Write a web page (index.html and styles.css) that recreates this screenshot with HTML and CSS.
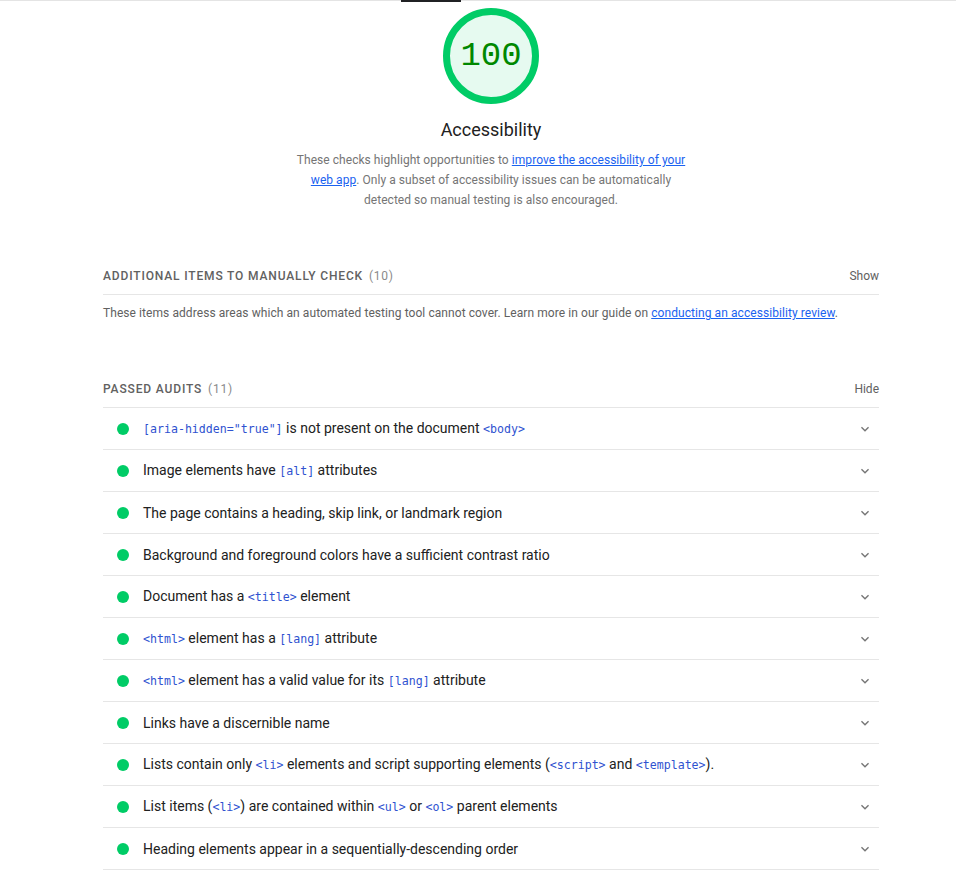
FILE: index.html
```html
<!DOCTYPE html>
<html lang="en">
<head>
<meta charset="utf-8">
<title>Accessibility</title>
<link rel="stylesheet" href="styles.css">
</head>
<body>
<div class="tabbar"><div class="tab-indicator"></div></div>
<main class="category">
  <div class="score">
    <svg class="gauge" width="96" height="96" viewBox="0 0 96 96">
      <circle cx="48" cy="48" r="44.5" fill="#e6faf0" stroke="#00cc66" stroke-width="7"/>
    </svg>
    <div class="gauge-value">100</div>
    <div class="score-title">Accessibility</div>
    <p class="score-desc">These checks highlight opportunities to <a href="#">improve the accessibility of your web app</a>. Only a subset of accessibility issues can be automatically detected so manual testing is also encouraged.</p>
  </div>

  <section class="clump">
    <div class="clump-header">
      <span class="clump-title">Additional items to manually check <span class="clump-count">(10)</span></span>
      <span class="clump-toggle">Show</span>
    </div>
    <p class="clump-desc">These items address areas which an automated testing tool cannot cover. Learn more in our guide on <a href="#">conducting an accessibility review</a>.</p>
  </section>

  <section class="clump passed">
    <div class="clump-header">
      <span class="clump-title">Passed audits <span class="clump-count">(11)</span></span>
      <span class="clump-toggle">Hide</span>
    </div>
    <ul class="audits">
      <li class="audit"><span class="dot"></span><span class="audit-title"><code>[aria-hidden="true"]</code> is not present on the document <code>&lt;body&gt;</code></span><svg class="chev" width="16" height="16" viewBox="0 0 24 24"><path d="M7.41 8.59L12 13.17l4.59-4.58L18 10l-6 6-6-6 1.41-1.41z"/></svg></li>
      <li class="audit"><span class="dot"></span><span class="audit-title">Image elements have <code>[alt]</code> attributes</span><svg class="chev" width="16" height="16" viewBox="0 0 24 24"><path d="M7.41 8.59L12 13.17l4.59-4.58L18 10l-6 6-6-6 1.41-1.41z"/></svg></li>
      <li class="audit"><span class="dot"></span><span class="audit-title">The page contains a heading, skip link, or landmark region</span><svg class="chev" width="16" height="16" viewBox="0 0 24 24"><path d="M7.41 8.59L12 13.17l4.59-4.58L18 10l-6 6-6-6 1.41-1.41z"/></svg></li>
      <li class="audit"><span class="dot"></span><span class="audit-title">Background and foreground colors have a sufficient contrast ratio</span><svg class="chev" width="16" height="16" viewBox="0 0 24 24"><path d="M7.41 8.59L12 13.17l4.59-4.58L18 10l-6 6-6-6 1.41-1.41z"/></svg></li>
      <li class="audit"><span class="dot"></span><span class="audit-title">Document has a <code>&lt;title&gt;</code> element</span><svg class="chev" width="16" height="16" viewBox="0 0 24 24"><path d="M7.41 8.59L12 13.17l4.59-4.58L18 10l-6 6-6-6 1.41-1.41z"/></svg></li>
      <li class="audit"><span class="dot"></span><span class="audit-title"><code>&lt;html&gt;</code> element has a <code>[lang]</code> attribute</span><svg class="chev" width="16" height="16" viewBox="0 0 24 24"><path d="M7.41 8.59L12 13.17l4.59-4.58L18 10l-6 6-6-6 1.41-1.41z"/></svg></li>
      <li class="audit"><span class="dot"></span><span class="audit-title"><code>&lt;html&gt;</code> element has a valid value for its <code>[lang]</code> attribute</span><svg class="chev" width="16" height="16" viewBox="0 0 24 24"><path d="M7.41 8.59L12 13.17l4.59-4.58L18 10l-6 6-6-6 1.41-1.41z"/></svg></li>
      <li class="audit"><span class="dot"></span><span class="audit-title">Links have a discernible name</span><svg class="chev" width="16" height="16" viewBox="0 0 24 24"><path d="M7.41 8.59L12 13.17l4.59-4.58L18 10l-6 6-6-6 1.41-1.41z"/></svg></li>
      <li class="audit"><span class="dot"></span><span class="audit-title">Lists contain only <code>&lt;li&gt;</code> elements and script supporting elements (<code>&lt;script&gt;</code> and <code>&lt;template&gt;</code>).</span><svg class="chev" width="16" height="16" viewBox="0 0 24 24"><path d="M7.41 8.59L12 13.17l4.59-4.58L18 10l-6 6-6-6 1.41-1.41z"/></svg></li>
      <li class="audit"><span class="dot"></span><span class="audit-title">List items (<code>&lt;li&gt;</code>) are contained within <code>&lt;ul&gt;</code> or <code>&lt;ol&gt;</code> parent elements</span><svg class="chev" width="16" height="16" viewBox="0 0 24 24"><path d="M7.41 8.59L12 13.17l4.59-4.58L18 10l-6 6-6-6 1.41-1.41z"/></svg></li>
      <li class="audit"><span class="dot"></span><span class="audit-title">Heading elements appear in a sequentially-descending order</span><svg class="chev" width="16" height="16" viewBox="0 0 24 24"><path d="M7.41 8.59L12 13.17l4.59-4.58L18 10l-6 6-6-6 1.41-1.41z"/></svg></li>
    </ul>
  </section>
</main>
</body>
</html>
```

FILE: styles.css
```css
html, body {
  margin: 0;
  padding: 0;
  background: #ffffff;
}
body {
  font-family: Roboto, "Liberation Sans", sans-serif;
  color: #212121;
  overflow: hidden;
}
a {
  color: #1a62f0;
  text-decoration: underline;
}
.tabbar {
  height: 2px;
  border-top: 1px solid #e4e4e4;
  box-sizing: border-box;
  position: relative;
}
.tab-indicator {
  position: absolute;
  top: -1px;
  left: 401px;
  width: 60px;
  height: 2px;
  background: #202124;
}
.category {
  width: 776px;
  margin-left: 103px;
}
.score {
  display: flex;
  flex-direction: column;
  align-items: center;
  padding-top: 6px;
  position: relative;
}
.gauge {
  display: block;
}
.gauge-value {
  position: absolute;
  top: 6px;
  left: 0;
  right: 0;
  height: 96px;
  line-height: 96px;
  text-align: center;
  font-family: "Liberation Mono", monospace;
  font-size: 34px;
  color: #008800;
}
.score-title {
  margin-top: 14px;
  font-size: 18px;
  line-height: 24px;
  color: #212121;
}
.score-desc {
  margin: 8px 0 0;
  width: 400px;
  text-align: center;
  font-size: 12px;
  line-height: 20px;
  letter-spacing: 0.05px;
  color: #757575;
}
.clump {
  margin-top: 46px;
}
.clump.passed {
  margin-top: 46px;
}
.clump-header {
  display: flex;
  justify-content: space-between;
  align-items: center;
  padding: 10px 0 8px;
  line-height: 20px;
  border-bottom: 1px solid #e6e6e6;
}
.clump-title {
  font-size: 12px;
  font-weight: 500;
  text-transform: uppercase;
  letter-spacing: 0.85px;
  color: #616161;
}
.clump-count {
  font-weight: 400;
  color: #8a8a8a;
  letter-spacing: 0.8px;
  margin-left: 2px;
}
.clump-toggle {
  font-size: 12px;
  color: #616161;
}
.clump-desc {
  margin: 8px 0 0;
  font-size: 12px;
  line-height: 20px;
  letter-spacing: 0.07px;
  color: #616161;
}
.audits {
  list-style: none;
  margin: 0;
  padding: 0;
}
.audit {
  display: flex;
  align-items: center;
  height: 41px;
  border-bottom: 1px solid #e6e6e6;
  padding: 0 6px 0 14px;
  font-size: 14px;
}
.dot {
  width: 12px;
  height: 12px;
  border-radius: 50%;
  background: #00cc66;
  flex: none;
}
.audit-title {
  flex: 1;
  margin-left: 14px;
  color: #212121;
  line-height: 20px;
}
.audit-title code {
  font-family: "DejaVu Sans Mono", monospace;
  font-size: 11.6px;
  color: #2f52d0;
}
.chev {
  flex: none;
  fill: #757575;
}
```
